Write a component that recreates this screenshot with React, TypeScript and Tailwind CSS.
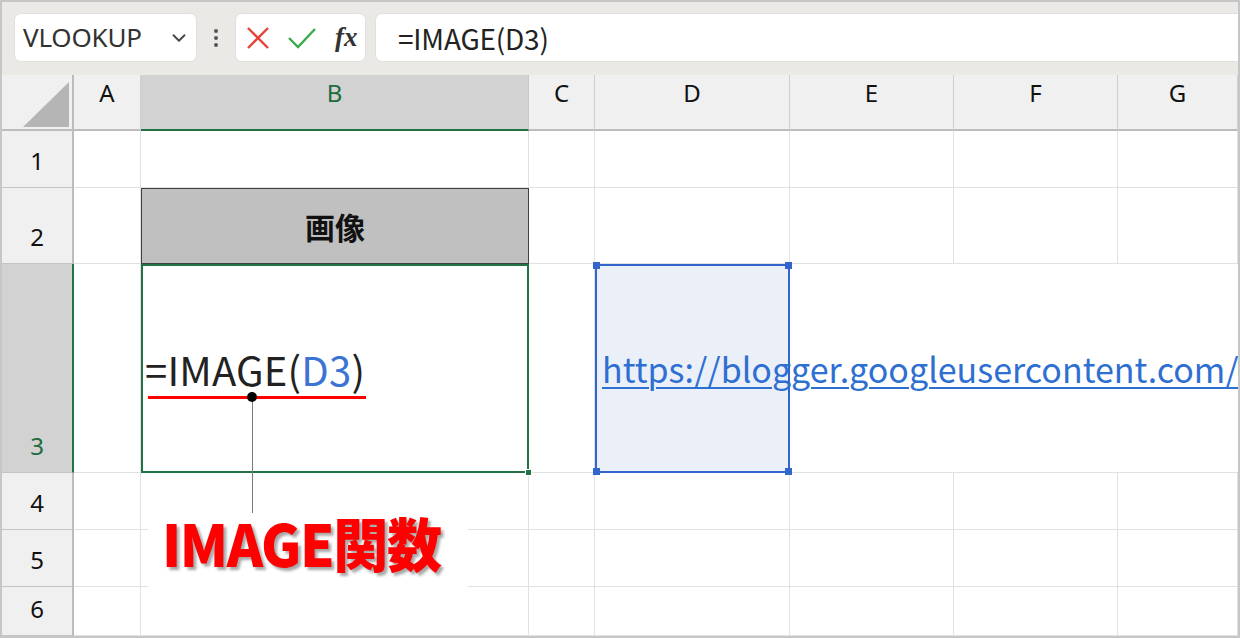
import React from "react";
import { ChevronDown } from "lucide-react";

const JP = { fontFamily: '"Noto Sans CJK JP", "Noto Sans", sans-serif' };
const UI = { fontFamily: '"Noto Sans", "Open Sans", sans-serif' };

const cols = ["A", "B", "C", "D", "E", "F", "G"];

const ColHeader = ({ label, active }: { label: string; active?: boolean }) => (
  <div
    className={
      active
        ? "flex justify-center pt-[2px] bg-[#d2d2d2] border-r border-[#c8c8c8] border-b-2 border-b-[#217346] text-[#1e6b3e] text-[24px] leading-[32px]"
        : "flex justify-center pt-[2px] bg-[#f0f0f0] border-r border-[#cfcfcf] border-b-2 border-b-[#bdbdbd] text-[#111] text-[24px] leading-[32px]"
    }
    style={UI}
  >
    {label}
  </div>
);

const RowHeader = ({ n, active }: { n: number; active?: boolean }) => (
  <div
    className={
      active
        ? "flex items-end justify-center pb-[10px] bg-[#d2d2d2] border-b border-[#c4c4c4] border-r-2 border-r-[#217346] text-[#1e6b3e] text-[24px] leading-[32px]"
        : "flex items-end justify-center pb-[10px] bg-[#f0f0f0] border-b border-[#c4c4c4] border-r-2 border-r-[#bdbdbd] text-[#111] text-[24px] leading-[32px]"
    }
    style={UI}
  >
    {n}
  </div>
);

const Cell = ({ className = "" }: { className?: string }) => (
  <div className={"border-r border-b border-[#e1e1e1] bg-white " + className} />
);

const Handle = ({ className }: { className: string }) => (
  <div className={"absolute w-[7px] h-[7px] bg-[#3266cc] " + className} />
);

export default function App() {
  return (
    <div className="relative w-[1240px] h-[638px] overflow-hidden border-2 border-[#c6c6c6] bg-white">
      {/* formula bar */}
      <div className="flex items-start h-[73px] pt-[11px] pl-[12px] bg-[#ebe9e6]">
        <div className="flex items-center justify-between w-[183px] h-[49px] rounded-[7px] bg-white border border-[#e2e0de] pl-[8px] pr-[6px]">
          <span className="text-[26px] text-[#333] tracking-[-0.2px]" style={UI}>
            VLOOKUP
          </span>
          <ChevronDown size={22} strokeWidth={2} color="#444" />
        </div>
        <div className="flex flex-col items-center justify-center gap-[3px] w-[38px] h-[49px]">
          <div className="w-[4px] h-[4px] rounded-full bg-[#555]" />
          <div className="w-[4px] h-[4px] rounded-full bg-[#555]" />
          <div className="w-[4px] h-[4px] rounded-full bg-[#555]" />
        </div>
        <div className="flex items-center w-[131px] h-[49px] rounded-[7px] bg-white border border-[#e2e0de] pl-[9px]">
          <svg width="26" height="26" viewBox="0 0 26 26">
            <path d="M3 3 L23 23 M23 3 L3 23" stroke="#e5433a" strokeWidth="2.4" fill="none" />
          </svg>
          <svg width="30" height="26" viewBox="0 0 30 26" className="ml-[16px]">
            <path d="M2 13 L11 22 L28 4" stroke="#3aaa4b" strokeWidth="2.4" fill="none" />
          </svg>
          <span
            className="ml-[18px] italic font-bold text-[27px] text-[#333] leading-none"
            style={{ fontFamily: '"Liberation Serif", "DejaVu Serif", serif' }}
          >
            fx
          </span>
        </div>
        <div className="flex items-center flex-1 h-[49px] ml-[9px] rounded-l-[7px] bg-white border border-r-0 border-[#e2e0de] pl-[22px]">
          <span className="text-[28px] text-[#222] tracking-[-0.2px]" style={JP}>
            =IMAGE(D3)
          </span>
        </div>
      </div>

      {/* grid */}
      <div className="relative">
        <div className="grid grid-cols-[72px_67px_388px_66px_195px_164px_164px_1fr] grid-rows-[56px_57px_76px_209px_57px_57px_49px]">
          {/* header row */}
          <div className="relative bg-[#f0f0f0] border-r-2 border-[#bdbdbd] border-b-2 border-b-[#bdbdbd]">
            <svg width="48" height="48" viewBox="0 0 48 48" className="absolute left-[20px] top-[6px]">
              <path d="M47 1 L47 46 L1 46 Z" fill="#b5b5b5" />
            </svg>
          </div>
          {cols.map((c) => (
            <ColHeader key={c} label={c} active={c === "B"} />
          ))}

          {/* row 1 */}
          <RowHeader n={1} />
          {cols.map((c) => (
            <Cell key={c} />
          ))}

          {/* row 2 */}
          <RowHeader n={2} />
          <Cell />
          <div
            className="flex items-center justify-center bg-[#c0c0c0] border-[1.5px] border-[#404040] font-bold text-[30px] text-[#111]"
            style={JP}
          >
            画像
          </div>
          <Cell />
          <Cell />
          <Cell />
          <Cell />
          <Cell />

          {/* row 3 */}
          <RowHeader n={3} active />
          <Cell />
          <div className="relative flex items-center pl-[2px] border-2 border-[#217346] bg-white z-10">
            <span className="text-[40px] text-[#222] leading-none tracking-[0.2px]" style={JP}>
              =IMAGE(<span className="text-[#3b74d4]">D3</span>)
            </span>
            <div className="absolute -right-[5px] -bottom-[5px] w-[7px] h-[7px] bg-[#217346] border border-white" />
          </div>
          <Cell />
          <div className="relative flex items-center pl-[5px] border-2 border-[#3266cc] bg-[#ebeff8] z-20">
            <span
              className="whitespace-nowrap text-[34px] leading-none text-[#2e6fd2] underline decoration-[1.5px] underline-offset-[4px]"
              style={JP}
            >
              https://blogger.googleusercontent.com/
            </span>
            <Handle className="-left-[4px] -top-[4px]" />
            <Handle className="-right-[4px] -top-[4px]" />
            <Handle className="-left-[4px] -bottom-[4px]" />
            <Handle className="-right-[4px] -bottom-[4px]" />
          </div>
          <div className="col-span-3 border-b border-[#e1e1e1] bg-white" />

          {/* rows 4-6 */}
          {[4, 5, 6].map((n) => (
            <React.Fragment key={n}>
              <RowHeader n={n} />
              {cols.map((c) => (
                <Cell key={c} />
              ))}
            </React.Fragment>
          ))}
        </div>

        {/* annotation */}
        <div className="absolute left-[146px] top-[321px] w-[218px] h-[3px] bg-[#ff0000] z-30" />
        <div className="absolute left-[250px] top-[322px] w-[1px] h-[116px] bg-[#7a7a7a] z-30" />
        <div className="absolute left-[245px] top-[317px] w-[10px] h-[10px] rounded-full bg-black z-30" />
        <div className="absolute left-[146px] top-[448px] w-[320px] h-[65px] bg-white z-30 flex items-start pl-[14px]">
          <span
            className="-mt-[10px] origin-left scale-x-[0.95] font-black text-[58px] leading-none text-[#ff0000] tracking-[-1.5px] [text-shadow:3px_3px_3px_rgba(0,0,0,0.35)]"
            style={JP}
          >
            IMAGE関数
          </span>
        </div>
      </div>
    </div>
  );
}
